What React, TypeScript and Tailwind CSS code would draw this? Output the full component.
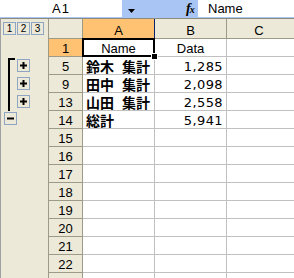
import React from "react";

type Row = {
  n: string;
  a?: string[];
  b?: string;
  sel?: boolean;
  outline?: "plus" | "minus";
  bracket?: "top" | "mid";
  hideNum?: boolean;
};

const rows: Row[] = [
  { n: "1", sel: true },
  { n: "5", a: ["鈴木", "集計"], b: "1,285", outline: "plus", bracket: "top" },
  { n: "9", a: ["田中", "集計"], b: "2,098", outline: "plus", bracket: "mid" },
  { n: "13", a: ["山田", "集計"], b: "2,558", outline: "plus", bracket: "mid" },
  { n: "14", a: ["総計"], b: "5,941", outline: "minus" },
  { n: "15" },
  { n: "16" },
  { n: "17" },
  { n: "18" },
  { n: "19" },
  { n: "20" },
  { n: "21" },
  { n: "22" },
  { n: "23", hideNum: true },
];

const LAT = "font-['Liberation_Sans',Arial,sans-serif]";

function OBtn({ children }: { children: React.ReactNode }) {
  return (
    <div className="w-[13px] h-[13px] shrink-0 border border-[#8ea6c4] bg-[#ece9d8] flex items-center justify-center">
      {children}
    </div>
  );
}

function Plus() {
  return (
    <svg width="7" height="7" viewBox="0 0 7 7">
      <rect x="2.5" y="0" width="2" height="7" fill="#000" />
      <rect x="0" y="2.5" width="7" height="2" fill="#000" />
    </svg>
  );
}

function Minus() {
  return (
    <svg width="7" height="7" viewBox="0 0 7 7">
      <rect x="0" y="2.5" width="7" height="2" fill="#000" />
    </svg>
  );
}

export default function App() {
  return (
    <div className={`w-[294px] h-[278px] overflow-hidden bg-white flex flex-col ${LAT} text-[13px] text-black`}>
      {/* formula bar */}
      <div className="h-[18px] shrink-0 bg-[#a9c5f3] flex">
        <div className="w-[122px] h-[17px] bg-white flex items-center justify-center leading-none tracking-[1px]">
          A1
        </div>
        <div className="w-[64px] h-[17px] flex items-start">
          <svg width="7" height="4" viewBox="0 0 7 4" className="ml-[6px] mt-[9px]">
            <polygon points="0,0 7,0 3.5,4" fill="#000" />
          </svg>
        </div>
        <div className="w-[12px] h-[17px] flex items-center font-['Liberation_Serif',serif] italic font-bold text-[14px] leading-none">
          f<span className="text-[10px] -ml-[1px] mt-[3px]">x</span>
        </div>
        <div className="flex-1 h-[17px] bg-white pl-[10px] leading-[18px]">Name</div>
      </div>

      {/* sheet */}
      <div className="flex-1 flex flex-col border-t border-[#8d8b7c] border-l border-l-[#a0a0a0]">
        {/* header row */}
        <div className="flex h-[20px] shrink-0">
          <div className="w-[48px] border-r border-[#9d9b87] bg-[#ece9d8] flex gap-[1px] pl-[2px] pt-[3px]">
            {["1", "2", "3"].map((k) => (
              <div
                key={k}
                className="w-[13px] h-[13px] border border-[#8ea6c4] bg-[#ece9d8] flex items-center justify-center text-[10px] leading-none"
              >
                {k}
              </div>
            ))}
          </div>
          <div className="w-[34px] bg-[#ece9d8] border-r border-b border-[#9d9b87]" />
          <div className="w-[72px] bg-[#ffc172] border-r border-b border-[#0a246a] text-center leading-[23px]">A</div>
          <div className="w-[72px] bg-[#ece9d8] border-r border-b border-[#9d9b87] text-center leading-[23px]">B</div>
          <div className="flex-1 bg-[#ece9d8] border-b border-[#9d9b87] text-center leading-[23px] pr-[3px]">C</div>
        </div>

        {rows.map((r) => (
          <div key={r.n} className="flex h-[18px] shrink-0">
            {/* outline gutter */}
            <div className="w-[48px] shrink-0 border-r border-[#9d9b87] bg-[#ece9d8] flex items-start">
              {r.bracket === "top" && (
                <div className="ml-[7px] mt-[1px] w-[7px] h-[17px] border-l-2 border-t-2 border-black" />
              )}
              {r.bracket === "mid" && (
                <div className="ml-[7px] w-[7px] h-[18px] border-l-2 border-black" />
              )}
              {r.outline === "plus" && (
                <div className="ml-[2px] mt-[2px]">
                  <OBtn>
                    <Plus />
                  </OBtn>
                </div>
              )}
              {r.outline === "minus" && (
                <div className="ml-[3px] mt-[1px]">
                  <OBtn>
                    <Minus />
                  </OBtn>
                </div>
              )}
            </div>
            {/* row header */}
            <div
              className={`w-[34px] shrink-0 border-b border-[#9d9b87] text-center leading-[20px] overflow-hidden ${
                r.sel ? "bg-[#ffc172] border-r border-r-[#0a246a]" : "bg-[#ece9d8] border-r"
              }`}
            >
              {r.hideNum ? "" : r.n}
            </div>
            {/* A */}
            <div className="w-[72px] shrink-0 border-r border-b border-[#c0c0c0] relative whitespace-nowrap">
              {r.sel && (
                <>
                  <div className="text-center leading-[19px]">Name</div>
                  <div className="absolute -left-[1px] -top-[1px] -right-[1px] -bottom-[1px] border-2 border-black z-10" />
                  <div className="absolute left-[68px] top-[14px] w-[7px] h-[7px] bg-black border border-white z-20" />
                </>
              )}
              {r.a && (
                <div className="h-[17px] pl-[3px] pt-[1px] font-['Noto_Sans_CJK_JP',sans-serif] font-bold text-[14px] leading-[16px] flex">
                  <span>{r.a[0]}</span>
                  {r.a[1] && <span className="ml-[8px]">{r.a[1]}</span>}
                </div>
              )}
            </div>
            {/* B */}
            <div className="w-[72px] shrink-0 border-r border-b border-[#c0c0c0] whitespace-nowrap">
              {r.sel && <div className="text-center leading-[19px]">Data</div>}
              {r.b && (
                <div className="text-right pr-[3px] font-['DejaVu_Sans',sans-serif] text-[13px] tracking-[0.4px] leading-[19px]">
                  {r.b}
                </div>
              )}
            </div>
            {/* C */}
            <div className="flex-1 border-b border-[#c0c0c0]" />
          </div>
        ))}
      </div>
    </div>
  );
}
